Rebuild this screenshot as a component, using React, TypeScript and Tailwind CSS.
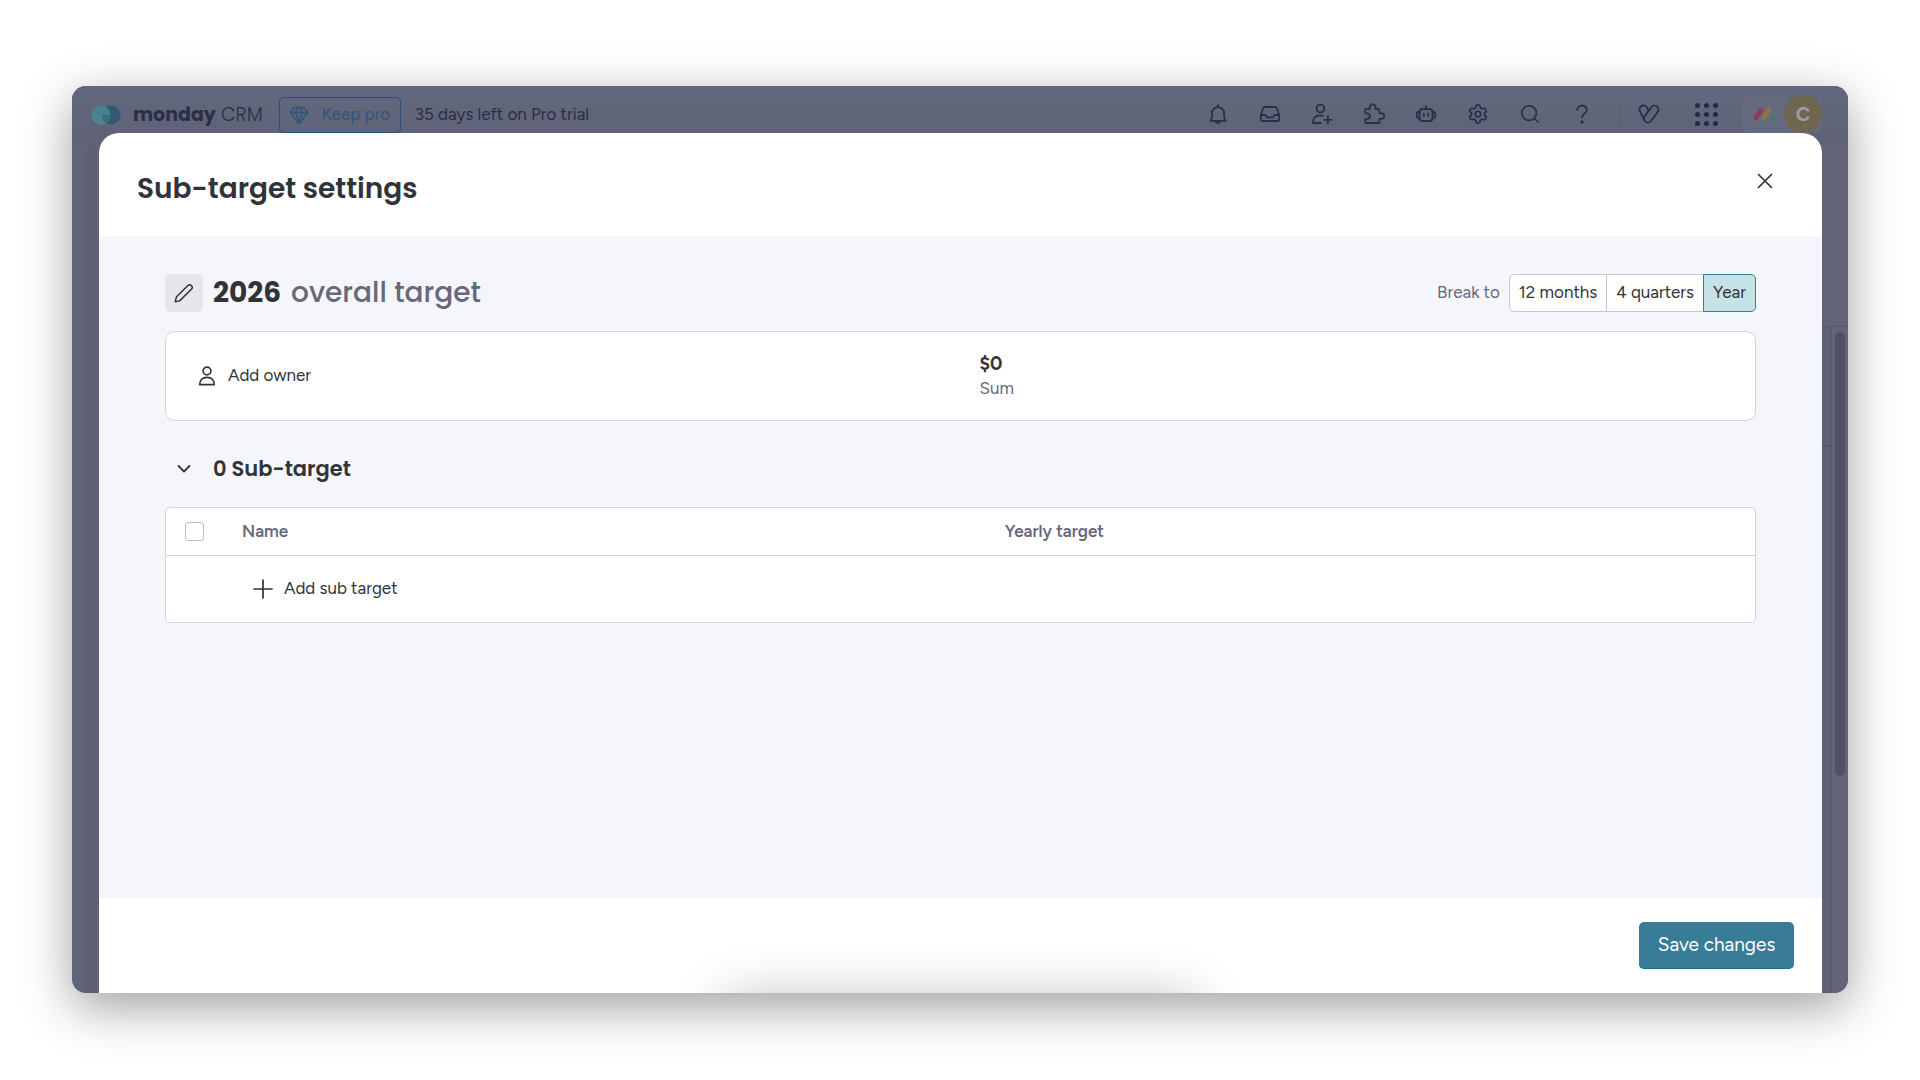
import { useState } from "react";
import type { ReactNode } from "react";
import { Gem, Search, Settings } from "lucide-react";

const PERIODS = ["12 months", "4 quarters", "Year"];

export default function App() {
  return (
    <div className="min-h-screen flex bg-white px-[72px] pt-[86px] pb-[87px] font-['Figtree','Inter',sans-serif] text-[#323338]">
      <div className="flex-1 min-w-0 grid rounded-[14px] overflow-hidden bg-[#5f647a] shadow-[0_14px_50px_rgba(0,0,0,0.38)]">
        <Workspace />
        <SubTargetModal />
      </div>
    </div>
  );
}

/* Dimmed app behind the modal */
function Workspace() {
  return (
    <div className="[grid-area:1/1] min-w-0 flex flex-col">
      <header className="h-[57px] flex items-start justify-between pl-[19px] pr-[26px] pt-[9px] bg-linear-to-b from-[#63687d] to-[#5f6277] text-[#2b2e45]">
        <div className="flex items-center h-10">
          <CrmLogo />
          <div className="ml-3 text-[19px] leading-6 whitespace-nowrap font-['Poppins','Inter',sans-serif]">
            <span className="font-bold">monday</span> <span className="font-light">CRM</span>
          </div>
          <button className="ml-4 h-9 w-[122px] flex items-center justify-center gap-3 rounded-[5px] border border-[#284f75] text-[#2f5578] text-[17px] whitespace-nowrap">
            <Gem className="w-5 h-5" strokeWidth={1.8} /> Keep pro
          </button>
          <span className="ml-[14px] text-[17px] whitespace-nowrap">35 days left on Pro trial</span>
        </div>
        <div className="flex items-center h-[38px]">
          <nav className="flex items-center gap-7 mr-[26px]">
            <TopIcon label="Notifications">
              <path d="M4.4 18.8h15.2c-1.1-1.5-1.5-2.9-1.5-4.6v-3a6.1 6.1 0 0 0-12.2 0v3c0 1.7-.4 3.1-1.5 4.6zM12 3v2M9.4 19.2c.5 1.2 1.4 1.8 2.6 1.8s2.1-.6 2.6-1.8" />
            </TopIcon>
            <TopIcon label="Inbox">
              <path d="M2.8 12.8 5.2 6.2A2 2 0 0 1 7.1 5h9.8a2 2 0 0 1 1.9 1.2l2.4 6.6V17a2 2 0 0 1-2 2H4.8a2 2 0 0 1-2-2zM3 13h4.3c1 0 .9 2.4 2.2 2.4h5c1.3 0 1.2-2.4 2.2-2.4H21" />
            </TopIcon>
            <TopIcon label="Invite members">
              <circle cx="10.4" cy="6.5" r="3.9" />
              <path d="M10.9 21H2.900c0-4.600 2.900-7.600 7.200-7.600 1 0 1.900.2 2.700.5M17.900 14.200v7.200M14.300 17.800h7.200" />
            </TopIcon>
            <TopIcon label="Apps">
              <path d="M3.200 7.200h4c.6 0 .8-.5.6-1a3 3 0 1 1 5.700 0c-.2.5 0 1 .6 1h2.300c.6 0 1 .4 1 1v2.500c0 .6.5.8 1 .6a2.900 2.900 0 1 1 0 5.500c-.5-.2-1 0-1 .6V20c0 .6-.4 1-1 1H4.200c-.6 0-1-.4-1-1v-2.400c0-.6.5-.8 1-.6a2.900 2.900 0 1 0 0-5.500c-.5.2-1 0-1-.6z" />
            </TopIcon>
            <TopIcon label="Agents">
              <rect x="5.5" y="7" width="13" height="12" rx="3" />
              <path d="M12 4.2V7M5.5 10H4.3c-.9 0-1.500.6-1.500 1.500v3c0 .9.6 1.500 1.500 1.500h1.200M18.500 10h1.200c.9 0 1.500.6 1.500 1.500v3c0 .9-.6 1.500-1.500 1.500h-1.200M9.800 11.600v2.400M14.200 11.600v2.400" />
            </TopIcon>
            <button aria-label="Settings"><Settings className="w-6 h-6 p-px" strokeWidth={1.9} /></button>
            <button aria-label="Search"><Search className="w-6 h-6 p-px" strokeWidth={1.8} /></button>
            <TopIcon label="Help">
              <path d="M7.3 8.2c0-2.8 2-4.7 4.7-4.7s4.7 1.8 4.7 4.400c0 3.500-4.700 3.800-4.700 7.600" />
              <circle cx="12" cy="20" r=".8" fill="currentColor" />
            </TopIcon>
          </nav>
          <div className="w-px h-6 bg-[#555a70]" />
          <div className="ml-4 flex">
            <TopIcon label="Favorites">
              <rect x="10.3" y="2.5" width="8" height="19" rx="4" transform="rotate(36 14.3 12)" />
              <path d="M11.6 8.8 10.1 5.7A4 4 0 0 0 2.9 9.3l4.500 9" />
            </TopIcon>
          </div>
          <button aria-label="Products" className="ml-[34px] grid grid-cols-3 gap-1">
            {Array.from({ length: 9 }, (_, i) => (
              <span key={i} className="w-[5px] h-[5px] rounded-full bg-[#252a42]" />
            ))}
          </button>
          <div className="ml-6 h-[38px] flex items-center rounded-md bg-[#656a7f] pl-[10px]">
            <svg viewBox="0 0 24 16" className="w-6 h-4">
              <path d="M4 12 8.500 4.500" stroke="#8f3c5c" strokeWidth="5" strokeLinecap="round" />
              <path d="M12 12 16.500 4.500" stroke="#8c7549" strokeWidth="5" strokeLinecap="round" />
              <circle cx="21" cy="12" r="2.700" fill="#3a8258" />
            </svg>
            <button className="ml-2 w-[38px] h-[38px] rounded-full bg-[#706650] text-[#9c9daa] text-xl font-bold">C</button>
          </div>
        </div>
      </header>
      <div className="flex-1 flex justify-between">
        <div className="ml-[13px] w-5 rounded-tl-xl bg-[#605f74]" />
        <div className="w-[26px] flex flex-col bg-[#646579]">
          <div className="h-[184px] border-b border-[#575a6e] bg-[#626377]" />
          <div className="flex-1 flex">
            <div className="w-[10px] border-r border-[#56596d] bg-[#5e6075]">
              <div className="h-[120px] border-b-2 border-[#56596d]" />
            </div>
            <div className="ml-[3px] mt-[5px] w-[10px] h-[444px] rounded-full bg-[#505164]" />
          </div>
        </div>
      </div>
    </div>
  );
}

function SubTargetModal() {
  const [period, setPeriod] = useState("Year");

  return (
    <section
      role="dialog"
      aria-labelledby="modal-title"
      className="[grid-area:1/1] relative min-w-0 mt-[47px] ml-[27px] mr-[26px] flex flex-col rounded-t-[20px] overflow-hidden bg-white"
    >
      <div className="h-[103px] flex items-start justify-between pl-[38px] pr-[45px] pt-9">
        <h1 id="modal-title" className="text-[28px] leading-10 font-semibold font-['Poppins','Inter',sans-serif]">
          Sub-target settings
        </h1>
        <button aria-label="Close" className="w-6 h-6 flex items-center justify-center">
          <svg viewBox="0 0 16 16" className="w-4 h-4" stroke="currentColor" strokeWidth="1.7" strokeLinecap="round">
            <path d="M1.500 1.500 14.500 14.500M14.500 1.500 1.500 14.500" />
          </svg>
        </button>
      </div>

      <div className="flex-1 bg-[#f5f6fb] px-[66px] pt-[38px] pb-16">
        {/* Target title */}
        <div className="flex items-center justify-between h-[38px]">
          <div className="flex items-center">
            <button aria-label="Edit target" className="w-[38px] h-[38px] flex items-center justify-center rounded-[5px] bg-[#e6e7eb]">
              <svg viewBox="0 0 20 20" className="w-5 h-5" fill="none" stroke="currentColor" strokeWidth="1.5" strokeLinejoin="round">
                <path d="M1.300 18.700c.3-2.200.7-4 1.300-4.900L14.200 2.200a1.900 1.900 0 0 1 2.700 0l.9.9a1.900 1.900 0 0 1 0 2.700L6.200 17.400c-.9.6-2.700 1-4.900 1.300z" />
              </svg>
            </button>
            <h2 className="ml-[10px] flex gap-[10px] text-[28px] leading-10 font-['Poppins','Inter',sans-serif]">
              <strong className="font-bold">2026</strong>
              <span className="text-[#676879] font-medium">overall target</span>
            </h2>
          </div>
          <div className="flex items-center gap-[10px] text-[17px] text-[#676879]">
            <span id="break-label">Break to</span>
            <div role="group" aria-labelledby="break-label" className="flex text-[#323338]">
              {PERIODS.map((p) => (
                <button
                  key={p}
                  aria-pressed={p === period}
                  onClick={() => setPeriod(p)}
                  className={`h-[38px] px-[9px] border -ml-px first:rounded-l-[5px] last:rounded-r-[5px] ${
                    p === period ? "relative bg-[#c5e2e6] border-[#387c97]" : "bg-white border-[#c3c6d4]"
                  }`}
                >
                  {p}
                </button>
              ))}
            </div>
          </div>
        </div>

        <div className="mt-[19px] h-[90px] grid grid-cols-2 items-center rounded-[10px] border border-[#d0d4e4] bg-white">
          <div className="pl-[31px]">
            <button className="flex items-center gap-[11px] text-[17px]">
              <svg viewBox="0 0 20 20" className="w-5 h-5" fill="none" stroke="currentColor" strokeWidth="1.7" strokeLinejoin="round">
                <circle cx="10" cy="5" r="3.9" />
                <path d="M2.700 18.700c0-4.300 2.700-7.300 7.300-7.300s7.300 3 7.300 7.300z" />
              </svg>
              Add owner
            </button>
          </div>
          <div className="pl-[19px]">
            <div className="text-[19px] leading-6 font-bold">$0</div>
            <div className="text-[17px] leading-6 text-[#676879]">Sum</div>
          </div>
        </div>

        {/* Sub-targets */}
        <div className="mt-7 h-10 flex items-center pl-3">
          <button aria-label="Collapse" className="w-[14px] h-[14px]">
            <svg viewBox="0 0 14 14" fill="none" stroke="currentColor" strokeWidth="1.8" strokeLinecap="round" strokeLinejoin="round">
              <path d="M1.500 4 7 9.500 12.500 4" />
            </svg>
          </button>
          <h3 className="ml-[22px] text-[21px] leading-7 font-semibold font-['Poppins','Inter',sans-serif]">0 Sub-target</h3>
        </div>

        <div className="mt-[18px] rounded-[5px] border border-[#d0d4e4] bg-white">
          <table className="w-full table-fixed text-left text-[17px]">
            <thead className="text-[#676879]">
              <tr className="h-[47px] border-b border-[#d0d4e4]">
                <th className="w-[76px] pl-[19px]">
                  <input
                    type="checkbox"
                    aria-label="Select all"
                    className="block appearance-none w-[19px] h-[19px] rounded-[3px] border border-[#b9bccb] bg-white checked:bg-[#387c97]"
                  />
                </th>
                <th className="w-[48%] font-semibold">Name</th>
                <th className="font-semibold">Yearly target</th>
              </tr>
            </thead>
            <tbody>
              <tr className="h-[67px]">
                <td />
                <td colSpan={2} className="pl-[11px]">
                  <button className="flex items-center gap-[11px]">
                    <svg viewBox="0 0 20 20" className="w-5 h-5" stroke="currentColor" strokeWidth="1.7" strokeLinecap="round">
                      <path d="M10 1v18M1 10h18" />
                    </svg>
                    Add sub target
                  </button>
                </td>
              </tr>
            </tbody>
          </table>
        </div>
      </div>

      <footer className="h-[95px] flex items-start justify-end pt-6 pr-7">
        <button className="h-[47px] w-[155px] rounded-[5px] border-b border-[#1f6f87] bg-[#387c97] text-white text-[19px]">Save changes</button>
      </footer>

      {/* Shadow of the notification tray tucked under the bottom edge */}
      <div className="absolute top-full left-1/2 -translate-x-1/2 mt-1 w-[470px] h-20 rounded-lg shadow-[0_0_50px_rgba(0,0,0,0.25)]" />
    </section>
  );
}

function TopIcon({ label, children }: { label: string; children: ReactNode }) {
  return (
    <button aria-label={label}>
      <svg viewBox="0 0 24 24" className="w-6 h-6" fill="none" stroke="currentColor" strokeWidth="1.8" strokeLinecap="round" strokeLinejoin="round">
        {children}
      </svg>
    </button>
  );
}

function CrmLogo() {
  return (
    <svg viewBox="0 0 30 20" className="w-[30px] h-5">
      <defs>
        <linearGradient id="crm-left" x1="0" y1="1" x2="1" y2="0">
          <stop offset="0" stopColor="#4f8a92" />
          <stop offset="1" stopColor="#427a8a" />
        </linearGradient>
      </defs>
      <circle cx="20" cy="10" r="9.7" fill="#305a73" />
      <circle cx="10" cy="10" r="9.7" fill="url(#crm-left)" />
      <path d="M11 10h8.700A9.700 9.700 0 0 1 15 18.300 9.700 9.700 0 0 1 11 10z" fill="#3b6c80" />
    </svg>
  );
}
